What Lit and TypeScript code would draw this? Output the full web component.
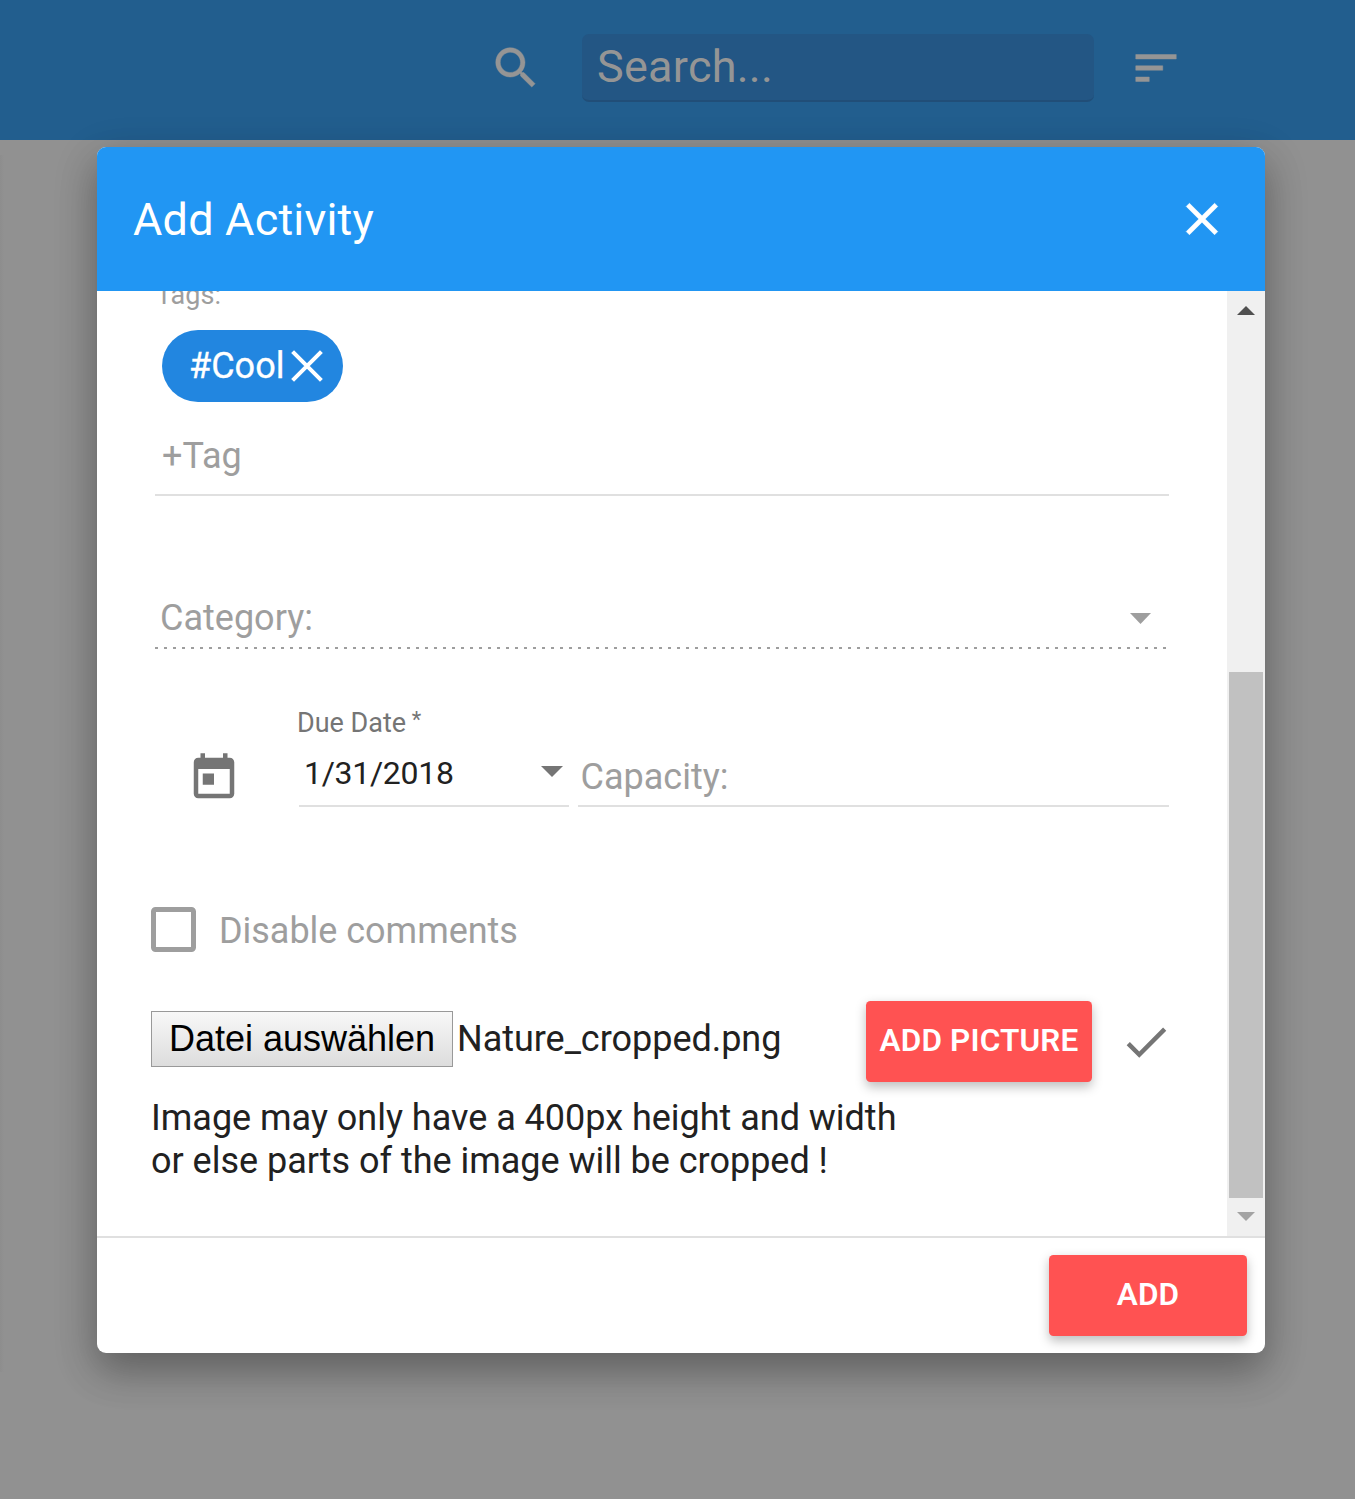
import { LitElement, html, css, svg } from "lit";
import { customElement, property } from "lit/decorators.js";

const ICONS: Record<string, unknown> = {
  search: svg`<path d="M15.5 14h-.79l-.28-.27C15.41 12.59 16 11.11 16 9.5 16 5.91 13.09 3 9.5 3S3 5.91 3 9.5 5.91 16 9.5 16c1.61 0 3.09-.59 4.23-1.57l.27.28v.79l5 4.99L20.49 19l-4.99-5zm-6 0C7.01 14 5 11.99 5 9.5S7.01 5 9.5 5 14 7.01 14 9.5 11.99 14 9.5 14z" stroke="currentColor" stroke-width=".2"/>`,
  sort: svg`<path d="M3 18h6v-2H3v2zM3 6v2h18V6H3zm0 7h12v-2H3v2z" stroke="currentColor" stroke-width=".2"/>`,
  close: svg`<path d="M19 6.41L17.59 5 12 10.59 6.41 5 5 6.41 10.59 12 5 17.59 6.41 19 12 13.41 17.59 19 19 17.59 13.41 12z" stroke="currentColor" stroke-width=".25"/>`,
  remove: svg`<path d="M5.6 5.6L18.4 18.4M18.4 5.6L5.6 18.4" stroke="currentColor" stroke-width="1.8"/>`,
  today: svg`<path d="M19 3h-1V1h-2v2H8V1H6v2H5c-1.11 0-1.99.9-1.99 2L3 19c0 1.1.89 2 2 2h14c1.1 0 2-.9 2-2V5c0-1.1-.9-2-2-2zm0 16H5V8h14v11zM7 10h5v5H7z"/>`,
  check: svg`<path d="M9 16.17L4.83 12l-1.42 1.41L9 19 21 7l-1.41-1.41z"/>`,
};

@customElement("md-icon")
class MdIcon extends LitElement {
  @property() name = "";
  static styles = css`
    :host { display: block; width: 54px; height: 54px; flex: none; }
    svg { display: block; width: 54px; height: 54px; fill: currentColor; }
  `;
  render() {
    return html`<svg viewBox="0 0 24 24">${ICONS[this.name]}</svg>`;
  }
}

@customElement("app-root")
class AppRoot extends LitElement {
  static styles = css`
    :host {
      display: block;
      height: 1499px;
      overflow: hidden;
      background: linear-gradient(90deg, #8d8d8d, #919191) 0 155px / 4px 1217px no-repeat #919191;
      font-family: Roboto, "Liberation Sans", sans-serif;
      font-size: 36px;
      line-height: 36px;
      color: #212121;
    }
    * { box-sizing: border-box; }
    .topbar {
      height: 140px;
      background: #225e8e;
      color: #959595;
      display: flex;
      align-items: flex-start;
      padding: 34px 0 0 489px;
    }
    .topbar md-icon { margin-top: 7px; }
    .search {
      width: 512px;
      height: 68px;
      margin: 0 35px 0 39px;
      padding-left: 15px;
      border-radius: 7px;
      background: #235684;
      border-bottom: 2px solid #214e78;
      font-size: 45px;
      line-height: 66px;
      letter-spacing: 0.25px;
    }
    .dialog {
      position: relative;
      width: 1168px;
      height: 1206px;
      margin: 7px 0 0 97px;
      border-radius: 9px;
      background: #fff;
      display: flex;
      flex-direction: column;
      box-shadow: 0 18px 38px rgba(0,0,0,.2), 0 13.5px 45px rgba(0,0,0,.19);
    }
    .title {
      height: 144px;
      flex: none;
      display: flex;
      align-items: center;
      justify-content: space-between;
      padding: 0 36px;
      border-radius: 9px 9px 0 0;
      background: #2196f3;
      color: #fff;
      font-size: 45px;
      letter-spacing: 0.2px;
    }
    .title span { padding-top: 2px; }
    .body { height: 945px; flex: none; display: flex; overflow: hidden; }
    .form { width: 1130px; padding: 0 58px 0 54px; }
    .muted { color: #9e9e9e; }
    .tags-label { margin: -14px 0 17px 6px; font-size: 27px; text-indent: -1px; }
    .chip {
      display: flex;
      align-items: center;
      width: 181px;
      height: 72px;
      margin-left: 11px;
      padding-left: 27px;
      border-radius: 36px;
      background: #2286e0;
      color: #fff;
    }
    .chip span { width: 91px; white-space: nowrap; -webkit-text-stroke: 0.3px #fff; }
    .tag-input {
      height: 94px;
      margin-left: 4px;
      padding: 36px 0 0 7px;
      border-bottom: 2px solid #e0e0e0;
    }
    .select {
      display: flex;
      justify-content: space-between;
      height: 153px;
      margin-left: 4px;
      padding: 104px 18px 0 5px;
      background: repeating-linear-gradient(90deg, #9e9e9e 0 3px, transparent 3px 9px) bottom left / 1012px 2px no-repeat;
    }
    .caret {
      width: 21px;
      height: 11px;
      background: currentColor;
      clip-path: polygon(0 0, 100% 0, 50% 100%);
    }
    .select .caret { margin-top: 13px; }
    .schedule { display: flex; height: 158px; align-items: flex-end; }
    .schedule md-icon { margin: 0 58px 2px 36px; color: #757575; }
    .date { width: 270px; margin-right: 9px; }
    .date-label { color: #757575; font-size: 27px; margin-left: -2px; }
    .star { font-size: 22px; position: relative; top: -5px; }
    .date-value {
      display: flex;
      justify-content: space-between;
      height: 64px;
      padding: 12px 6px 0 5px;
      border-bottom: 2px solid #e0e0e0;
      font-size: 32px;
    }
    .date-value span { letter-spacing: -0.3px; }
    .date-value .caret { margin-top: 11px; width: 22px; color: #757575; }
    .capacity { width: 591px; height: 48px; padding-left: 2.5px; border-bottom: 2px solid #e0e0e0; }
    .check-row { display: flex; align-items: center; gap: 23px; height: 45px; margin-top: 99.5px; }
    .check-row span { padding-top: 3px; letter-spacing: -0.03px; }
    .box { width: 45px; height: 45px; border: 5px solid #9e9e9e; border-radius: 4.5px; }
    .file-row { display: flex; align-items: center; height: 81px; margin-top: 49.5px; }
    .choose {
      flex: none;
      width: 302px;
      height: 56px;
      margin: -5px 4px 0 0;
      border: 1px solid #999;
      background: linear-gradient(#f8f8f8, #ddd);
      color: #000;
      font-family: "Liberation Sans", Arial, sans-serif;
      line-height: 54px;
      text-align: center;
      white-space: nowrap;
    }
    .file-name { flex: none; width: 409px; margin-top: -5px; letter-spacing: -0.03px; }
    .btn {
      flex: none;
      height: 81px;
      border-radius: 4.5px;
      background: #ff5252;
      color: #fff;
      font-size: 31.5px;
      font-weight: 600;
      line-height: 80px;
      letter-spacing: 0.15px;
      text-align: center;
      box-shadow: 0 4.5px 11px rgba(0,0,0,.26);
    }
    .picture { width: 226px; }
    .file-row md-icon { margin-left: 27px; margin-top: 0; color: #757575; }
    .note { margin-top: 15px; line-height: 43px; white-space: nowrap; letter-spacing: -0.02px; }
    .scrollbar {
      width: 38px;
      background: #f0f0f0;
      display: flex;
      flex-direction: column;
      align-items: center;
    }
    .up, .down { width: 18px; height: 9px; }
    .up { margin-top: 15px; background: #505050; clip-path: polygon(0 100%, 100% 100%, 50% 0); }
    .down { margin-top: 14px; background: #a3a3a3; clip-path: polygon(0 0, 100% 0, 50% 100%); }
    .thumb { width: 34px; height: 526px; margin-top: 357px; background: #c1c1c1; }
    .footer {
      height: 117px;
      display: flex;
      justify-content: flex-end;
      padding: 17px 18px 0;
      border-top: 2px solid #e0e0e0;
    }
    .add { width: 198px; }
  `;

  render() {
    return html`
      <header class="topbar">
        <md-icon name="search"></md-icon>
        <div class="search">Search...</div>
        <md-icon name="sort"></md-icon>
      </header>
      <section class="dialog">
        <div class="title"><span>Add Activity</span><md-icon name="close"></md-icon></div>
        <div class="body">
          <div class="form">
            <div class="tags-label muted">Tags:</div>
            <div class="chip"><span>#Cool</span><md-icon name="remove"></md-icon></div>
            <div class="tag-input muted">+Tag</div>
            <div class="select muted"><span>Category:</span><i class="caret"></i></div>
            <div class="schedule">
              <md-icon name="today"></md-icon>
              <div class="date">
                <div class="date-label">Due Date<span class="star"> *</span></div>
                <div class="date-value"><span>1/31/2018</span><i class="caret"></i></div>
              </div>
              <div class="capacity muted">Capacity:</div>
            </div>
            <div class="check-row muted"><i class="box"></i><span>Disable comments</span></div>
            <div class="file-row">
              <div class="choose">Datei auswählen</div>
              <div class="file-name">Nature_cropped.png</div>
              <div class="btn picture">ADD PICTURE</div>
              <md-icon name="check"></md-icon>
            </div>
            <div class="note">Image may only have a 400px height and width<br />or else parts of the image will be cropped !</div>
          </div>
          <div class="scrollbar"><i class="up"></i><i class="thumb"></i><i class="down"></i></div>
        </div>
        <div class="footer"><div class="btn add">ADD</div></div>
      </section>
    `;
  }
}
